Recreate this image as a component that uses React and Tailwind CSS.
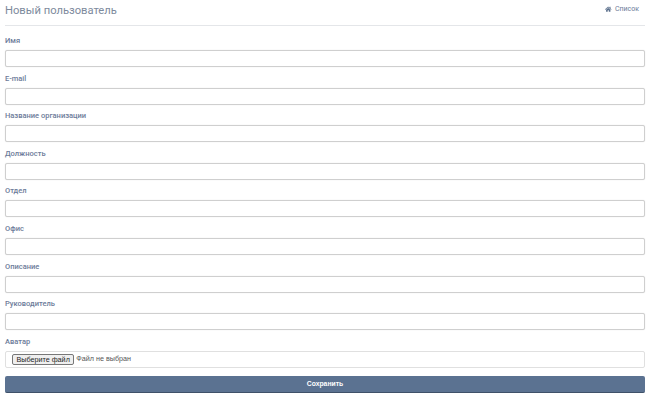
import React from "react";
import { FaHome } from "react-icons/fa";

const fields = ["Имя", "E-mail", "Название организации", "Должность", "Отдел", "Офис", "Описание", "Руководитель"];

function Label({ children }) {
  return <div className="h-[11px] text-[7.5px] leading-[11px] font-medium text-[#6b7a99] mb-[4px]">{children}</div>;
}

export default function App() {
  return (
    <div className="w-[650px] h-[403px] bg-white overflow-hidden">
      <div className="px-[5px] opacity-[0.99] font-['Roboto','Noto_Sans',sans-serif]">
        <div className="flex justify-between items-start h-[25px] border-b border-[#e4e6e9] box-content">
          <div className="text-[11.2px] leading-[21px] text-[#7c899c]">Новый пользователь</div>
          <div className="flex items-center gap-[3px] text-[7px] leading-[19px] text-[#6b7a99] pr-[6px]">
            <FaHome className="text-[#5a6f8c] w-[6.5px] h-[6.5px]" />
            <span>Список</span>
          </div>
        </div>
        <div className="flex flex-col gap-[5.6px] pt-[9px]">
          {fields.map((f) => (
            <div key={f}>
              <Label>{f}</Label>
              <div className="h-[17px] rounded-[2px] border border-[#cfcfcf] bg-white shadow-[0_0_1px_#d8d8d8]" />
            </div>
          ))}
          <div>
            <Label>Аватар</Label>
            <div className="h-[17px] rounded-[2px] border border-[#e0e0e0] bg-white flex items-center pl-[6px] gap-[2px]">
              <div className="h-[11px] px-[3.5px] rounded-[2px] border border-[#767676] bg-[#efefef] text-[7.2px] leading-[9px] text-[#222] font-['Liberation_Sans',sans-serif]">Выберите файл</div>
              <span className="text-[7.2px] text-[#555] font-['Liberation_Sans',sans-serif]">Файл не выбран</span>
            </div>
          </div>
        </div>
        <div className="mt-[8px] h-[17px] rounded-[2px] bg-[#5a7190] border-b border-[#3d4f68] flex items-center justify-center text-[6.8px] font-bold text-white font-['Liberation_Sans',sans-serif]">Сохранить</div>
      </div>
    </div>
  );
}
